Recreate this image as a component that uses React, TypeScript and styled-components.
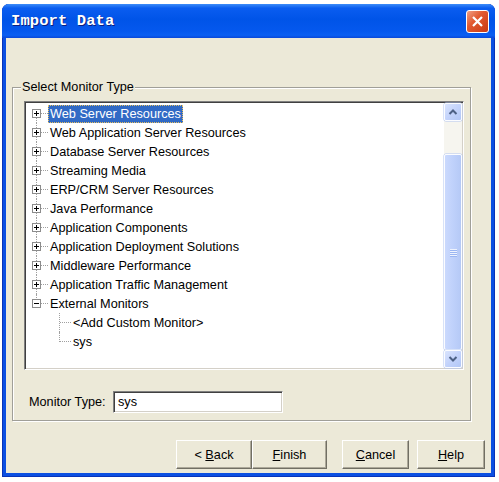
import styled, { createGlobalStyle } from "styled-components";

const GlobalStyle = createGlobalStyle`
  html, body {
    margin: 0;
    padding: 0;
    background: #ffffff;
  }
  body {
    font-family: "Liberation Sans", Arial, sans-serif;
    font-size: 12.7px;
    color: #000;
  }
`;

const Page = styled.div`
  padding: 4px 0 0 2px;
`;

const Window = styled.div`
  width: 493px;
  height: 473px;
  display: flex;
  flex-direction: column;
  border-radius: 7px 7px 0 0;
  overflow: hidden;
  background: #0b4fe2;
  box-shadow: inset 1px 0 #0833b8, inset -1px 0 #0833b8, inset 0 -1px #0833b8;
`;

const TitleBar = styled.div`
  height: 34px;
  flex: none;
  display: flex;
  align-items: center;
  justify-content: space-between;
  padding: 0 6px 0 9px;
  background: linear-gradient(
    to bottom,
    #3d8cf8 0%,
    #0a5df0 12%,
    #0054e8 45%,
    #0558ee 80%,
    #0a5ff2 92%,
    #0a48d8 100%
  );
`;

const Title = styled.span`
  font-family: "Liberation Mono", "Courier New", monospace;
  font-weight: bold;
  font-size: 15.5px;
  color: #ffffff;
  text-shadow: 1px 1px #0a1f80;
  letter-spacing: 0.1px;
`;

const CloseButton = styled.div`
  width: 23px;
  height: 23px;
  box-sizing: border-box;
  border: 1px solid #ffffff;
  border-radius: 3px;
  display: flex;
  align-items: center;
  justify-content: center;
  background: linear-gradient(135deg, #f0a085 0%, #e25a30 40%, #c83a14 100%);
`;

const Body = styled.div`
  flex: 1;
  margin: 0 4px 4px;
  background: #ece9d8;
  display: flex;
  flex-direction: column;
  padding: 42px 6px 4px 6px;
`;

const GroupBox = styled.fieldset`
  margin: 0 14px 0 0;
  padding: 0;
  min-width: 0;
  border: 1px solid #a09f98;
  box-shadow: inset 1px 1px #ffffff, 1px 1px #ffffff;
`;

const Legend = styled.legend`
  margin-left: 8px;
  padding: 0 1px;
  line-height: 15px;
  background: #ece9d8;
`;

const GroupContent = styled.div`
  padding: 6px 6px 7px 11px;
  display: flex;
  flex-direction: column;
`;

const TreeBox = styled.div`
  height: 269px;
  box-sizing: border-box;
  display: flex;
  background: #ffffff;
  border: 1px solid;
  border-color: #808080 #ffffff #ffffff #808080;
  box-shadow: inset 1px 1px #404040, inset -1px -1px #d4d0c8;
  padding: 1px;
`;

const TreeList = styled.div`
  flex: 1;
  padding-top: 1px;
`;

const Row = styled.div<{ $indent: number; $lineAt: number; $first?: boolean; $last?: boolean }>`
  position: relative;
  height: 19px;
  display: flex;
  align-items: center;
  padding-left: ${({ $indent }) => $indent}px;
  &::before {
    content: "";
    position: absolute;
    left: ${({ $lineAt }) => $lineAt}px;
    top: ${({ $first }) => ($first ? "50%" : "0")};
    bottom: ${({ $last }) => ($last ? "50%" : "0")};
    border-left: 1px dotted #a0a0a0;
  }
`;

const Expander = styled.svg`
  position: relative;
  z-index: 1;
  flex: none;
  display: block;
`;

const Connector = styled.span<{ $w: number }>`
  width: ${({ $w }) => $w}px;
  flex: none;
  border-top: 1px dotted #a0a0a0;
`;

const ItemLabel = styled.span<{ $selected?: boolean }>`
  height: 18px;
  line-height: 18px;
  padding: 0 2px;
  white-space: nowrap;
  color: ${({ $selected }) => ($selected ? "#ffffff" : "#000000")};
  background: ${({ $selected }) => ($selected ? "#316ac5" : "transparent")};
  outline: ${({ $selected }) => ($selected ? "1px dotted #e8c060" : "none")};
  outline-offset: -1px;
`;

const ScrollBar = styled.div`
  width: 18px;
  flex: none;
  display: flex;
  flex-direction: column;
  background: #f6f5ef;
`;

const ScrollButton = styled.div`
  height: 18px;
  flex: none;
  box-sizing: border-box;
  border: 1px solid #fbfcff;
  border-radius: 2px;
  box-shadow: 0 0 0 0.5px #b2c5f2;
  background: linear-gradient(135deg, #dae4fd 0%, #c3d3fb 50%, #b2c7f6 100%);
  display: flex;
  align-items: center;
  justify-content: center;
`;

const TrackGap = styled.div`
  height: 33px;
  flex: none;
`;

const Thumb = styled.div`
  flex: 1;
  box-sizing: border-box;
  border: 1px solid #fbfcff;
  border-radius: 2px;
  box-shadow: 0 0 0 0.5px #b2c5f2;
  background: linear-gradient(to right, #cad9fd 0%, #bfd1fb 50%, #b5c9f6 100%);
  display: flex;
  flex-direction: column;
  align-items: center;
  justify-content: center;
  gap: 1px;
`;

const Grip = styled.span`
  width: 7px;
  height: 1px;
  background: #eef3fe;
  box-shadow: 0 1px #9bb6f2;
`;

const MonitorRow = styled.div`
  margin-top: 21px;
  display: flex;
  align-items: center;
`;

const FieldLabel = styled.span`
  margin-left: 5px;
  width: 84px;
`;

const TextInput = styled.div`
  width: 170px;
  height: 22px;
  box-sizing: border-box;
  background: #ffffff;
  border: 1px solid;
  border-color: #808080 #ffffff #ffffff #808080;
  box-shadow: inset 1px 1px #404040, inset -1px -1px #d4d0c8;
  padding-left: 4px;
  line-height: 20px;
`;

const ButtonRow = styled.div`
  margin-top: 19px;
  display: flex;
  justify-content: flex-end;
`;

const Button = styled.div<{ $w: number; $gap?: number }>`
  width: ${({ $w }) => $w}px;
  height: 29px;
  margin-left: ${({ $gap }) => $gap ?? 0}px;
  box-sizing: border-box;
  display: flex;
  align-items: center;
  justify-content: center;
  background: #ece9d8;
  border: 1px solid;
  border-color: #ffffff #716f64 #716f64 #ffffff;
  box-shadow: inset -1px -1px #aca899;
  u {
    text-decoration: underline;
    text-underline-offset: 1px;
  }
`;

const PlusBox = ({ open }: { open?: boolean }) => (
  <Expander width="9" height="9" viewBox="0 0 9 9">
    <rect x="0.5" y="0.5" width="8" height="8" fill="#ffffff" stroke="#8c8c8c" />
    <path d="M2 4.5h5" stroke="#000" strokeWidth="1" />
    {!open && <path d="M4.5 2v5" stroke="#000" strokeWidth="1" />}
  </Expander>
);

const Chevron = ({ up }: { up?: boolean }) => (
  <svg width="10" height="8" viewBox="0 0 10 8">
    <path
      d={up ? "M1.5 6 L5 2.5 L8.5 6" : "M1.5 2 L5 5.5 L8.5 2"}
      fill="none"
      stroke="#4d6185"
      strokeWidth="2"
    />
  </svg>
);

const roots = [
  "Web Server Resources",
  "Web Application Server Resources",
  "Database Server Resources",
  "Streaming Media",
  "ERP/CRM Server Resources",
  "Java Performance",
  "Application Components",
  "Application Deployment Solutions",
  "Middleware Performance",
  "Application Traffic Management",
  "External Monitors",
];

const children = ["<Add Custom Monitor>", "sys"];

export default function App() {
  return (
    <>
      <GlobalStyle />
      <Page>
        <Window>
          <TitleBar>
            <Title>Import Data</Title>
            <CloseButton>
              <svg width="13" height="13" viewBox="0 0 13 13">
                <path d="M2 2 L11 11 M11 2 L2 11" stroke="#ffffff" strokeWidth="2.2" />
              </svg>
            </CloseButton>
          </TitleBar>
          <Body>
            <GroupBox>
              <Legend>Select Monitor Type</Legend>
              <GroupContent>
                <TreeBox>
                  <TreeList>
                    {roots.map((name, i) => (
                      <div key={name}>
                        <Row
                          $indent={6}
                          $lineAt={10}
                          $first={i === 0}
                          $last={i === roots.length - 1}
                        >
                          <PlusBox open={name === "External Monitors"} />
                          <Connector $w={7} />
                          <ItemLabel $selected={i === 0}>{name}</ItemLabel>
                        </Row>
                        {name === "External Monitors" &&
                          children.map((child, j) => (
                            <Row
                              key={child}
                              $indent={34}
                              $lineAt={33}
                              $last={j === children.length - 1}
                            >
                              <Connector $w={11} />
                              <ItemLabel>{child}</ItemLabel>
                            </Row>
                          ))}
                      </div>
                    ))}
                  </TreeList>
                  <ScrollBar>
                    <ScrollButton>
                      <Chevron up />
                    </ScrollButton>
                    <TrackGap />
                    <Thumb>
                      <Grip />
                      <Grip />
                      <Grip />
                      <Grip />
                    </Thumb>
                    <ScrollButton>
                      <Chevron />
                    </ScrollButton>
                  </ScrollBar>
                </TreeBox>
                <MonitorRow>
                  <FieldLabel>Monitor Type:</FieldLabel>
                  <TextInput>sys</TextInput>
                </MonitorRow>
              </GroupContent>
            </GroupBox>
            <ButtonRow>
              <Button $w={76}>
                &lt;&nbsp;<u>B</u>ack
              </Button>
              <Button $w={75}>
                <u>F</u>inish
              </Button>
              <Button $w={67} $gap={15}>
                <u>C</u>ancel
              </Button>
              <Button $w={68} $gap={8}>
                <u>H</u>elp
              </Button>
            </ButtonRow>
          </Body>
        </Window>
      </Page>
    </>
  );
}
